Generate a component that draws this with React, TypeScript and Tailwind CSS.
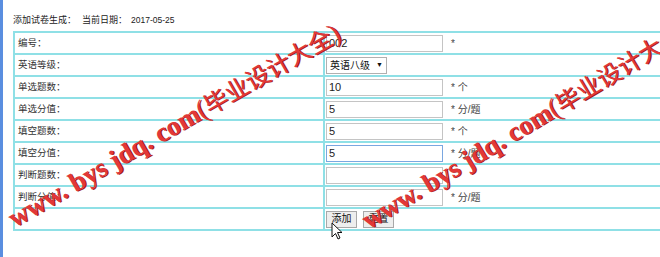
import { useState } from "react";

interface Row {
  label: string;
  value?: string;
  unit?: string;
  kind: "input" | "select" | "buttons";
  focus?: boolean;
}

const rows: Row[] = [
  { label: "编号：", value: "002", unit: "*", kind: "input" },
  { label: "英语等级：", kind: "select" },
  { label: "单选题数：", value: "10", unit: "* 个", kind: "input" },
  { label: "单选分值：", value: "5", unit: "* 分/题", kind: "input" },
  { label: "填空题数：", value: "5", unit: "* 个", kind: "input" },
  { label: "填空分值：", value: "5", unit: "* 分/题", kind: "input", focus: true },
  { label: "判断题数：", value: "", unit: "", kind: "input" },
  { label: "判断分值：", value: "", unit: "* 分/题", kind: "input" },
  { label: "", kind: "buttons" },
];

const font = { fontFamily: '"Liberation Sans", "Noto Sans CJK SC", sans-serif' };

function Watermark({ className }: { className: string }) {
  return (
    <div
      className={`absolute pointer-events-none whitespace-nowrap text-[#e23838] origin-left ${className}`}
      style={{
        textShadow: "1px 1px 0 #9a1a1a",
        fontFamily: '"Liberation Serif", "Noto Sans CJK SC", serif',
      }}
    >
      <span className="text-[27px] font-bold">www. bys jdq. com</span>
      <span className="text-[27px]">(</span>
      <span className="text-[24px] font-normal">毕业设计大全</span>
      <span className="text-[27px]">)</span>
    </div>
  );
}

export default function App() {
  const [values, setValues] = useState(rows.map((r) => r.value ?? ""));

  return (
    <div
      className="relative w-[660px] h-[257px] overflow-hidden bg-white text-[#333]"
      style={font}
    >
      {/* left frame strip */}
      <div className="absolute left-0 top-0 h-full w-[3px] bg-[#5a8ee0]" />

      <div className="pl-[13px] pt-[10px]">
        <div className="h-[21px] flex items-center text-[9px] text-[#222]">
          <span>添加试卷生成：</span>
          <span className="ml-[6px]">当前日期：</span>
          <span className="ml-[4px] text-[8.5px]">2017-05-25</span>
        </div>

        <table className="w-[700px] border-collapse">
          <tbody>
            {rows.map((row, i) => (
              <tr key={i} className="h-[22px]">
                <td className="w-[310px] border-2 border-[#8fe0e6] p-0 pl-[3px] text-[9.5px]">
                  {row.label}
                </td>
                <td className="border-2 border-[#8fe0e6] p-0 pl-[1px]">
                  {row.kind === "input" && (
                    <div className="flex items-center">
                      <input
                        value={values[i]}
                        onChange={(e) => {
                          const next = [...values];
                          next[i] = e.target.value;
                          setValues(next);
                        }}
                        className={`w-[117px] h-[17px] px-[2px] text-[11px] text-[#222] outline-none bg-white border ${
                          row.focus ? "border-[#7aa7e0]" : "border-[#c4c4c4]"
                        }`}
                      />
                      <span className="ml-[8px] text-[10px] text-[#444] whitespace-nowrap">
                        {row.unit}
                      </span>
                    </div>
                  )}
                  {row.kind === "select" && (
                    <div className="w-[61px] h-[17px] border border-[#b0b0b0] flex items-center justify-between px-[3px] text-[10px] text-[#111] whitespace-nowrap">
                      <span>英语八级</span>
                      <span className="text-[7px]">▼</span>
                    </div>
                  )}
                  {row.kind === "buttons" && (
                    <div className="flex items-center gap-[6px]">
                      <button className="w-[31px] h-[17px] border border-[#a8a8a8] bg-[#eeeeee] text-[10px] leading-none text-[#111]">
                        添加
                      </button>
                      <button className="w-[31px] h-[17px] border border-[#a8a8a8] bg-[#eeeeee] text-[10px] leading-none text-[#111]">
                        重置
                      </button>
                    </div>
                  )}
                </td>
              </tr>
            ))}
          </tbody>
        </table>
      </div>

      {/* mouse cursor */}
      <svg
        className="absolute left-[331px] top-[222px]"
        width="12"
        height="18"
        viewBox="0 0 12 18"
      >
        <path
          d="M1 1 L1 15 L4.5 11.5 L7 17 L9 16 L6.5 10.5 L11 10.5 Z"
          fill="#fff"
          stroke="#111"
          strokeWidth="1"
        />
      </svg>

      <Watermark className="left-[10px] top-[200px] -rotate-[30deg]" />
      <Watermark className="left-[364px] top-[202px] -rotate-[31deg]" />
    </div>
  );
}
